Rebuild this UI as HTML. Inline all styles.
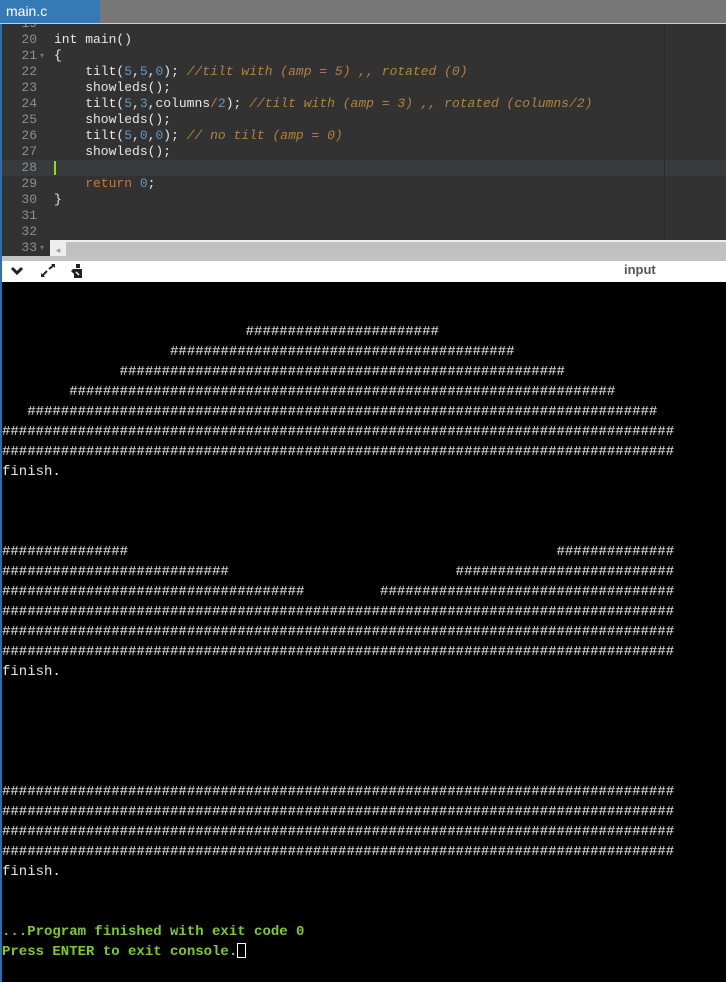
<!DOCTYPE html>
<html><head><meta charset="utf-8"><style>
html,body{margin:0;padding:0;width:726px;height:982px;overflow:hidden;background:#000;position:relative}
#tabs{position:absolute;left:0;top:0;width:726px;height:23px;background:#777}
#tab{position:absolute;left:0;top:0;width:100px;height:23px;background:#337ab7;color:#fff;font:14px "Liberation Sans",sans-serif;line-height:22px;padding-left:6px;box-sizing:border-box}
#ed{position:absolute;left:0;top:23px;width:726px;height:233px;background:#323232;overflow:hidden;border-top:1px solid #ccc;box-sizing:border-box}
#gut{position:absolute;left:2px;top:0;width:48px;height:100%;background:#323232}
#hl{position:absolute;left:0;top:136px;width:726px;height:16px;background:#393a3d}
.ln{position:absolute;left:0;width:37px;text-align:right;color:#8e8e8e;font:13px "Liberation Mono",monospace;line-height:16px}
.cd{position:absolute;left:54px;color:#e8e8e8;font:13px "Liberation Mono",monospace;line-height:16px;white-space:pre}
.n{color:#6897bb}.c{color:#b5823a;font-style:italic}.k{color:#cc7832}.o{color:#cc7832}
.fa{position:absolute;left:40px;color:#777;font-size:8px}
#sb{position:absolute;left:50px;top:216px;width:676px;height:16px;background:#c0c0c0;border-top:2px solid #eee}
#sb2{position:absolute;left:50px;top:218px;width:16px;height:16px;background:#eee;color:#999;font-size:9px;text-align:center;line-height:16px}
#rl{position:absolute;left:664px;top:0;width:1px;height:216px;background:#2b2b2b}
#tb{position:absolute;left:0;top:256px;width:726px;height:26px;background:#fff;border-top:5px solid #c2c2c2;box-sizing:border-box}
#inp{position:absolute;left:624px;top:1px;font:bold 13px "Liberation Sans",sans-serif;color:#555}
#con{position:absolute;left:2px;top:282px;margin:0;font:14px/20px "Liberation Mono",monospace;color:#e6e6e6;white-space:pre}
.g{color:#7ccc2a;font-weight:bold}
#cur{display:inline-block;width:9px;height:15px;border:1.5px solid #fff;vertical-align:-3px;box-sizing:border-box}
#lb{position:absolute;left:0;top:24px;width:2px;height:958px;background:#2a6fb0}
</style></head><body>
<div id="tabs"><div id="tab">main.c</div></div>
<div id="ed">
<div id="hl"></div>
<div id="rl"></div>
<div class="ln" style="top:-8px">19</div>
<div class="ln" style="top:8px">20</div>
<div class="ln" style="top:24px">21</div><div class="fa" style="top:27px">▾</div>
<div class="ln" style="top:40px">22</div>
<div class="ln" style="top:56px">23</div>
<div class="ln" style="top:72px">24</div>
<div class="ln" style="top:88px">25</div>
<div class="ln" style="top:104px">26</div>
<div class="ln" style="top:120px">27</div>
<div class="ln" style="top:136px">28</div>
<div class="ln" style="top:152px">29</div>
<div class="ln" style="top:168px">30</div>
<div class="ln" style="top:184px">31</div>
<div class="ln" style="top:200px">32</div>
<div class="ln" style="top:216px">33</div><div class="fa" style="top:219px">▾</div>
<div class="cd" style="top:8px">int main()</div>
<div class="cd" style="top:24px">{</div>
<div class="cd" style="top:40px">    tilt(<span class="n">5</span>,<span class="n">5</span>,<span class="n">0</span>); <span class="c">//tilt with (amp = 5) ,, rotated (0)</span></div>
<div class="cd" style="top:56px">    showleds();</div>
<div class="cd" style="top:72px">    tilt(<span class="n">5</span>,<span class="n">3</span>,columns<span class="o">/</span><span class="n">2</span>); <span class="c">//tilt with (amp = 3) ,, rotated (columns/2)</span></div>
<div class="cd" style="top:88px">    showleds();</div>
<div class="cd" style="top:104px">    tilt(<span class="n">5</span>,<span class="n">0</span>,<span class="n">0</span>); <span class="c">// no tilt (amp = 0)</span></div>
<div class="cd" style="top:120px">    showleds();</div>
<div style="position:absolute;left:54px;top:137px;width:2px;height:14px;background:#8fe000"></div>
<div class="cd" style="top:152px">    <span class="k">return</span> <span class="n">0</span>;</div>
<div class="cd" style="top:168px">}</div>
<div id="sb"></div><div id="sb2">◂</div>
</div>
<div id="tb">
<svg style="position:absolute;left:10px;top:5px" width="14" height="10" viewBox="0 0 14 10"><path d="M2 2 L7 7 L12 2" stroke="#222" stroke-width="3" fill="none"/></svg>
<svg style="position:absolute;left:40px;top:3px" width="16" height="14" viewBox="0 0 16 14"><path d="M2 12 L7 7 M9 5 L14 1" stroke="#222" stroke-width="2"/><path d="M1 13 L1 9 L5 13Z M15 0 L15 4 L11 0Z" fill="#222"/></svg>
<svg style="position:absolute;left:70px;top:3px" width="14" height="15" viewBox="0 0 14 15"><rect x="6" y="0" width="4" height="4" fill="#222"/><path d="M3 5 L12 5 L12 14 L4 14 L4 10 L1 7Z" fill="#222"/><path d="M6 8 L9 11" stroke="#fff" stroke-width="1.5"/></svg>
<div id="inp">input</div>
</div>
<pre id="con"></pre>
<div id="lb"></div>
<script>
function h(n){return '#'.repeat(n)}function s(n){return ' '.repeat(n)}
var L=['',''];
L.push(s(29)+h(23),s(20)+h(41),s(14)+h(53),s(8)+h(65),s(3)+h(75),h(80),h(80),'finish.','','','');
L.push(h(15)+s(51)+h(14),h(27)+s(27)+h(26),h(36)+s(9)+h(35),h(80),h(80),h(80),'finish.','','','','','');
L.push(h(80),h(80),h(80),h(80),'finish.','','');
var t=L.join('\n')+'\n<span class="g">...Program finished with exit code 0</span>\n<span class="g">Press ENTER to exit console.</span><span id="cur"></span>';
document.getElementById('con').innerHTML=t;
</script>
</body></html>
